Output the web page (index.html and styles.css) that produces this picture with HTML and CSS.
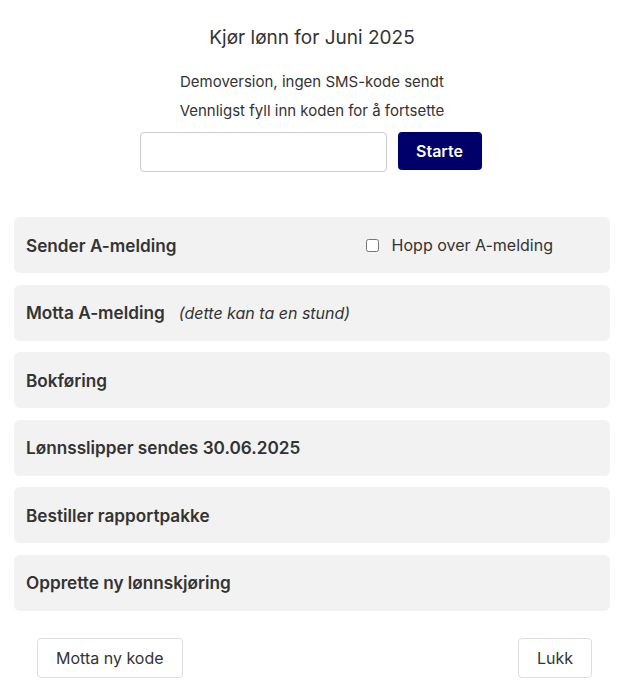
FILE: index.html
```html
<!DOCTYPE html>
<html lang="no">
<head>
<meta charset="utf-8">
<link rel="stylesheet" href="styles.css">
</head>
<body>
<div class="dialog">
  <h1 class="title">Kjør lønn for Juni 2025</h1>
  <p class="info">Demoversion, ingen SMS-kode sendt</p>
  <p class="info second">Vennligst fyll inn koden for å fortsette</p>
  <div class="code-row">
    <input class="code-input" type="text">
    <button class="btn-primary">Starte</button>
  </div>
  <div class="steps">
    <div class="step">
      <span class="step-title">Sender A-melding</span>
      <label class="skip"><input type="checkbox" class="skip-box"><span>Hopp over A-melding</span></label>
    </div>
    <div class="step">
      <span class="step-title">Motta A-melding</span>
      <span class="note">(dette kan ta en stund)</span>
    </div>
    <div class="step"><span class="step-title">Bokføring</span></div>
    <div class="step"><span class="step-title">Lønnsslipper sendes 30.06.2025</span></div>
    <div class="step"><span class="step-title">Bestiller rapportpakke</span></div>
    <div class="step"><span class="step-title">Opprette ny lønnskjøring</span></div>
  </div>
  <div class="footer">
    <button class="btn-secondary">Motta ny kode</button>
    <button class="btn-secondary">Lukk</button>
  </div>
</div>
</body>
</html>
```

FILE: styles.css
```css
* { box-sizing: border-box; }
body {
  margin: 0;
  background: #fff;
  font-family: "Inter", "Noto Sans", sans-serif;
  color: #333;
}
.dialog {
  padding: 25px 10px 0 14px;
}
.title {
  margin: 0;
  font-size: 19px;
  font-weight: 400;
  text-align: center;
  line-height: 26px;
  color: #333;
}
.info {
  margin: 21px 0 0;
  font-size: 15px;
  line-height: 20px;
  text-align: center;
  color: #333;
}
.info.second { margin-top: 9px; }
.code-row {
  display: flex;
  justify-content: center;
  gap: 11px;
  margin-top: 11px;
}
.code-input {
  width: 247px;
  height: 40px;
  border: 1px solid #ccc;
  border-radius: 4px;
  margin-left: -3px;
}
.btn-primary {
  width: 84px;
  height: 38px;
  background: #00006b;
  color: #fff;
  border: none;
  border-radius: 4px;
  font-family: inherit;
  font-weight: 600;
  font-size: 16px;
}
.steps {
  display: flex;
  flex-direction: column;
  gap: 11.6px;
  margin-top: 45px;
}
.step {
  height: 56px;
  background: #f2f2f2;
  border-radius: 6px;
  display: flex;
  align-items: center;
  padding: 0 12px;
}
.step-title {
  font-size: 17.2px;
  font-weight: 600;
  color: #333;
}
.skip {
  margin-left: auto;
  margin-right: 45px;
  display: flex;
  align-items: center;
  font-size: 16px;
  color: #333;
}
.skip-box {
  width: 13px;
  height: 13px;
  margin: 0 13px 0 0;
}
.note {
  margin-left: 14px;
  font-style: italic;
  font-size: 16px;
  color: #333;
}
.footer {
  display: flex;
  justify-content: space-between;
  margin-top: 27px;
  padding: 0 18px 0 23px;
}
.btn-secondary {
  height: 40px;
  padding: 0 18px;
  background: #fff;
  border: 1px solid #ddd;
  border-radius: 4px;
  font-family: inherit;
  font-size: 16px;
  color: #333;
}
```
